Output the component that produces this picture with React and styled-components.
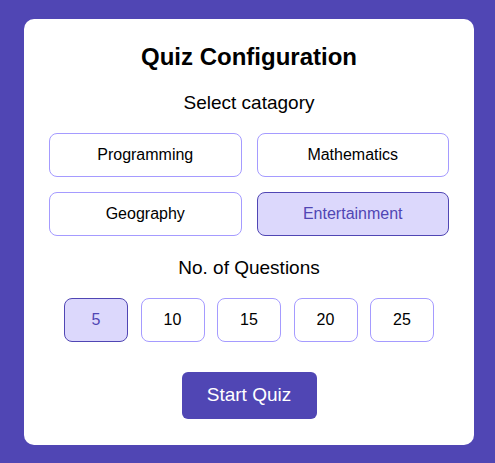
import React, { useState } from "react";
import styled, { createGlobalStyle } from "styled-components";

const Global = createGlobalStyle`
  html, body { margin: 0; padding: 0; }
  body {
    background: #5046b4;
    font-family: "Liberation Sans", Arial, sans-serif;
  }
  * { box-sizing: border-box; }
`;

const Page = styled.div`
  min-height: 463px;
  display: flex;
  align-items: center;
  padding: 0 21px 0 24px;
`;

const Card = styled.div`
  width: 450px;
  height: 426px;
  background: #ffffff;
  border-radius: 10px;
  padding: 24px 25px 26px;
  display: flex;
  flex-direction: column;
  align-items: stretch;
`;

const Title = styled.h1`
  margin: 0;
  font-size: 24px;
  line-height: 28px;
  font-weight: 700;
  color: #000;
  text-align: center;
`;

const Label = styled.h3`
  margin: ${(p) => p.$mt}px 0 0;
  font-size: 19px;
  line-height: 21px;
  font-weight: 400;
  color: #000;
  text-align: center;
`;

const CategoryGrid = styled.div`
  margin-top: 20px;
  display: grid;
  grid-template-columns: 1fr 1fr;
  gap: 15px;
`;

const Option = styled.button`
  font-family: inherit;
  font-size: 16px;
  height: 44px;
  padding: 0;
  border-radius: 8px;
  cursor: pointer;
  border: 1px solid ${(p) => (p.$active ? "#5046b4" : "#a59bff")};
  background: ${(p) => (p.$active ? "#dcd8fc" : "#ffffff")};
  color: ${(p) => (p.$active ? "#5046b4" : "#000000")};
`;

const NumberRow = styled.div`
  margin-top: 20px;
  display: flex;
  justify-content: center;
  gap: 12.5px;
`;

const NumberOption = styled(Option)`
  width: 64px;
`;

const StartButton = styled.button`
  align-self: center;
  margin-top: 30px;
  height: 47px;
  width: 135px;
  border: none;
  border-radius: 6px;
  background: #5046b4;
  color: #ffffff;
  font-family: inherit;
  font-size: 19px;
  cursor: pointer;
`;

const categories = ["Programming", "Mathematics", "Geography", "Entertainment"];
const counts = [5, 10, 15, 20, 25];

export default function App() {
  const [cat, setCat] = useState("Entertainment");
  const [count, setCount] = useState(5);
  return (
    <>
      <Global />
      <Page>
        <Card>
          <Title>Quiz Configuration</Title>
          <Label $mt={21}>Select catagory</Label>
          <CategoryGrid>
            {categories.map((c) => (
              <Option key={c} $active={c === cat} onClick={() => setCat(c)}>
                {c}
              </Option>
            ))}
          </CategoryGrid>
          <Label $mt={21}>No. of Questions</Label>
          <NumberRow>
            {counts.map((n) => (
              <NumberOption key={n} $active={n === count} onClick={() => setCount(n)}>
                {n}
              </NumberOption>
            ))}
          </NumberRow>
          <StartButton>Start Quiz</StartButton>
        </Card>
      </Page>
    </>
  );
}
